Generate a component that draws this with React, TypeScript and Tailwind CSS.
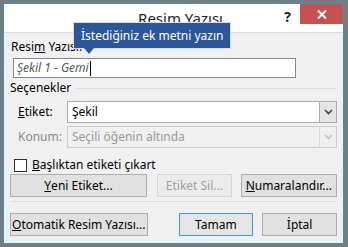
import React from 'react';

const Chevron: React.FC<{ className?: string }> = ({ className }) => (
    <svg width="9" height="6" viewBox="0 0 9 6" className={className}>
        <path d="M1 1l3.5 3.5L8 1" fill="none" stroke="currentColor" strokeWidth="1.6" />
    </svg>
);

const Btn: React.FC<{ children: React.ReactNode; className?: string; disabled?: boolean; primary?: boolean }> = ({ children, className = '', disabled, primary }) => (
    <button
        className={`h-[23px] flex items-center justify-center whitespace-nowrap text-[12px] border ${disabled ? 'text-[#a0a0a0] border-[#d6d6d6] bg-[#ececec]' : primary ? 'text-black border-[#3399ff] bg-[#e5e5e5]' : 'text-black border-[#adadad] bg-[#e1e1e1]'} ${className}`}
    >
        {children}
    </button>
);

const App: React.FC = () => {
    return (
        <div className="w-[348px] h-[247px] bg-[#7a7a7a] pt-[3px] pl-[3px]" style={{ fontFamily: '"Noto Sans", "Open Sans", sans-serif' }}>
            <div className="relative w-[341px] h-[241px] border border-[#1ba1d1] bg-[#f0f0f0] flex flex-col">
                {/* title bar */}
                <div className="relative h-[29px] bg-white border-b border-[#dadada] flex justify-center items-start pl-[14px]">
                    <span className="text-[15px] leading-[20px] pt-[4px] text-[#222] whitespace-nowrap">Resim Yazısı</span>
                    <span className="absolute right-[52px] top-[2px] text-[14px] font-bold text-[#222]">?</span>
                    <div className="absolute right-0 top-0 w-[43px] h-[20px] bg-[#c75050] flex items-center justify-center">
                        <svg width="10" height="9" viewBox="0 0 10 9">
                            <path d="M1 0.5l8 8M9 0.5l-8 8" stroke="white" strokeWidth="2" />
                        </svg>
                    </div>
                </div>

                {/* tooltip */}
                <div className="absolute left-[69px] top-[18px] z-10 w-[158px] h-[27px] bg-[#2b579a] border border-white/80 flex items-center pl-[7px]">
                    <span className="text-white text-[12px] leading-none whitespace-nowrap">İstediğiniz ek metni yazın</span>
                    <div className="absolute left-[10px] bottom-[-6px] w-0 h-0 border-l-[5px] border-r-[5px] border-t-[6px] border-l-transparent border-r-transparent border-t-[#2b579a]" />
                </div>

                <div className="flex flex-col px-[6px] pt-[6px] text-[12px] text-black whitespace-nowrap">
                    <div className="leading-[16px] pl-[1px]">Resi<span className="underline">m</span> Yazısı:</div>
                    <div className="mt-[3px] ml-[3px] w-[283px] h-[20px] bg-white border border-[#828790] flex items-center pl-[3px]">
                        <span className="italic text-[#4a5a74]">Şekil 1 - Gemi</span>
                        <span className="w-px h-[15px] bg-black ml-[1px]" />
                    </div>

                    <div className="mt-[2px] flex items-center gap-[4px] leading-[16px]">
                        <span>Seçenekler</span>
                        <div className="flex-1 h-px bg-[#dcdcdc]" />
                    </div>

                    <div className="mt-[5px] flex items-center">
                        <span className="w-[57px] pl-[8px]"><span className="underline">E</span>tiket:</span>
                        <div className="flex-1 h-[22px] bg-white border border-[#acacac] flex items-center">
                            <span className="flex-1 pl-[4px]">Şekil</span>
                            <div className="w-[17px] h-full bg-[#e5e5e5] border-l border-[#acacac] flex items-center justify-center text-[#444]">
                                <Chevron />
                            </div>
                        </div>
                    </div>

                    <div className="mt-[3px] flex items-center text-[#8a8a8a]">
                        <span className="w-[57px] pl-[8px]">Konum:</span>
                        <div className="flex-1 h-[22px] bg-[#f0f0f0] border border-[#cccccc] flex items-center">
                            <span className="flex-1 pl-[4px] text-[#999]">Seçili öğenin altında</span>
                            <div className="w-[17px] h-full border-l border-[#d9d9d9] flex items-center justify-center text-[#c0c0c0]">
                                <Chevron />
                            </div>
                        </div>
                    </div>

                    <div className="mt-[10px] flex items-center gap-[5px]">
                        <div className="w-[13px] h-[13px] bg-white border border-[#333] ml-[4px]" />
                        <span className="leading-[14px]"><span className="underline">B</span>aşlıktan etiketi çıkart</span>
                    </div>

                    <div className="mt-[2px] flex items-center">
                        <Btn className="w-[138px]"><span className="underline">Y</span>eni Etiket...</Btn>
                        <Btn disabled className="w-[75px] ml-[10px]">Etiket Sil...</Btn>
                        <Btn className="w-[97px] ml-[9px]"><span className="underline">N</span>umaralandır...</Btn>
                    </div>

                    <div className="mt-[4px] h-px bg-[#dcdcdc]" />

                    <div className="mt-[11px] flex items-center">
                        <Btn className="w-[138px]"><span className="underline">O</span>tomatik Resim Yazısı...</Btn>
                        <Btn primary className="w-[75px] ml-[31px]">Tamam</Btn>
                        <Btn className="w-[75px] ml-[9px]">İptal</Btn>
                    </div>
                </div>
            </div>
        </div>
    );
};

export default App;
